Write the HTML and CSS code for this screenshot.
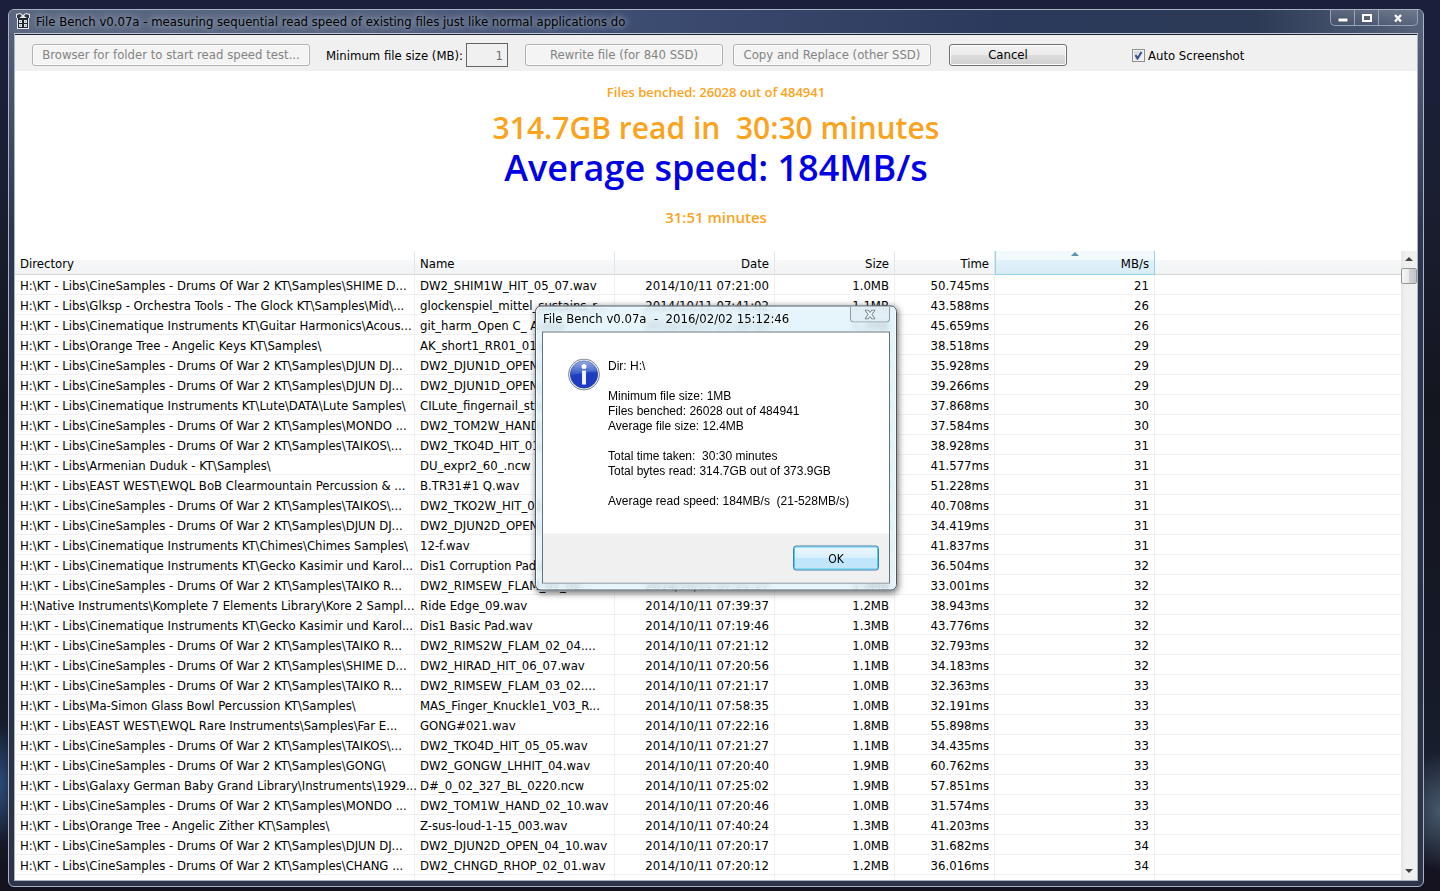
FILE: index.html
```html
<!DOCTYPE html>
<html lang="en">
<head>
    <meta charset="UTF-8">
    <meta name="viewport" content="width=device-width, initial-scale=1.0">
    <title>File Bench v0.07a</title>
    <link rel="stylesheet" href="styles.css">
</head>
<body>
    <div class="window">
        <div class="titlebar">
            <svg class="app-icon" width="16" height="16" viewBox="0 0 16 16">
                <path d="M1 1l4-1 3 2 3-2 4 1v4h-1v11H2V5H1z" fill="#e8ebf0"/>
                <path d="M2 2l3-1 2 2-3 2H2zM14 2l-3-1-2 2 3 2h2z" fill="#30343c"/>
                <path d="M3 5h10v10H3z" fill="#20242c"/>
                <path d="M4 7h3v3H4zM9 7h3v3H9zM4 11h3v3H4zM9 11h3v3H9z" fill="#dfe3ea"/>
                <path d="M5 8h1v1H5zM10 8h1v1h-1zM5 12h1v1H5zM10 12h1v1h-1z" fill="#7b818c"/>
            </svg>
            <h1 class="title">File Bench v0.07a - measuring sequential read speed of existing files just like normal applications do</h1>
            <div class="caption-buttons">
                <button type="button" aria-label="Minimize">
                    <svg width="12" height="10" viewBox="0 0 12 10"><path d="M1 5h10v4H1z" fill="#fff" stroke="#4a5567"/></svg>
                </button>
                <button type="button" aria-label="Maximize">
                    <svg width="12" height="10" viewBox="0 0 12 10"><path d="M2 2h8v6H2z" fill="none" stroke="#fff" stroke-width="2"/></svg>
                </button>
                <button type="button" class="close" aria-label="Close">
                    <svg width="12" height="10" viewBox="0 0 12 10"><path d="M3 2l6 6.500M9 2L3 8.500" stroke="#fff" stroke-width="2.400"/></svg>
                </button>
            </div>
        </div>

        <div class="client">
            <form class="toolbar">
                <button type="button" class="btn browse" disabled>Browser for folder to start read speed test...</button>
                <label class="size-label" for="min-size">Minimum file size (MB):</label>
                <input type="text" id="min-size" value="1" disabled>
                <button type="button" class="btn rewrite" disabled>Rewrite file (for 840 SSD)</button>
                <button type="button" class="btn copy" disabled>Copy and Replace (other SSD)</button>
                <button type="button" class="btn cancel">Cancel</button>
                <input type="checkbox" id="auto-shot" checked>
                <label for="auto-shot">Auto Screenshot</label>
            </form>

            <div class="stats">
                <p class="files">Files benched: 26028 out of 484941</p>
                <p class="read">314.7GB read in&nbsp; 30:30 minutes</p>
                <p class="speed">Average speed: 184MB/s</p>
                <p class="elapsed">31:51 minutes</p>
            </div>

            <div class="list">
                <div class="table-wrap">
                    <table id="results">
                        <colgroup>
                            <col class="col-dir">
                            <col class="col-name">
                            <col class="col-date">
                            <col class="col-size">
                            <col class="col-time">
                            <col class="col-speed">
                            <col>
                        </colgroup>
                        <thead>
                            <tr>
                                <th>Directory</th>
                                <th>Name</th>
                                <th class="num">Date</th>
                                <th class="num">Size</th>
                                <th class="num">Time</th>
                                <th class="num sorted">MB/s</th>
                                <th></th>
                            </tr>
                        </thead>
                        <tbody></tbody>
                    </table>
                </div>
                <div class="scrollbar">
                    <button type="button" aria-label="Scroll up"><svg width="8" height="5" viewBox="0 0 8 5"><path d="M4 0l4 4H0z" fill="#404040"/></svg></button>
                    <div class="thumb"></div>
                    <button type="button" class="down" aria-label="Scroll down"><svg width="8" height="5" viewBox="0 0 8 5"><path d="M0 0h8L4 4z" fill="#404040"/></svg></button>
                </div>
            </div>
        </div>

        <div class="dialog" role="dialog" aria-labelledby="dialog-title">
            <div class="dialog-title">
                <h2 id="dialog-title">File Bench v0.07a&nbsp; -&nbsp; 2016/02/02 15:12:46</h2>
                <button type="button" class="dialog-close" aria-label="Close">
                    <svg width="12" height="10" viewBox="0 0 12 10"><path d="M1 .5h3l2 2.500 2-2.500h3L8 5l3 4.500H8L6 7 4 9.500H1L4 5z" fill="#f4f8f9" stroke="#6b7b85"/></svg>
                </button>
            </div>
            <div class="dialog-client">
                <div class="message">
                    <svg class="info" width="32" height="32" viewBox="0 0 32 32">
                        <defs>
                            <linearGradient id="ball" x1="0" y1="0" x2="0" y2="1">
                                <stop offset="0" stop-color="#4a74d4"/>
                                <stop offset=".5" stop-color="#1d3fbe"/>
                                <stop offset="1" stop-color="#2038c8"/>
                            </linearGradient>
                            <linearGradient id="shine" x1="0" y1="0" x2="0" y2="1">
                                <stop offset="0" stop-color="#fff" stop-opacity=".4"/>
                                <stop offset="1" stop-color="#fff" stop-opacity=".08"/>
                            </linearGradient>
                        </defs>
                        <circle cx="16" cy="16" r="15.500" fill="#e4e8ec" stroke="#7d8a96"/>
                        <circle cx="16" cy="16" r="13.500" fill="url(#ball)" stroke="#24429c"/>
                        <path d="M3 17A13 13 0 0 1 29 13Q18 13 3 17z" fill="url(#shine)"/>
                        <circle cx="16" cy="8" r="2.500" fill="#fff"/>
                        <path d="M14 12h4v14h-4z" fill="#f1f3f8"/>
                    </svg>
                    <div class="message-text">
                        <p>Dir: H:\</p>
                        <p>Minimum file size: 1MB<br>Files benched: 26028 out of 484941<br>Average file size: 12.4MB</p>
                        <p>Total time taken:&nbsp; 30:30 minutes<br>Total bytes read: 314.7GB out of 373.9GB</p>
                        <p>Average read speed: 184MB/s&nbsp; (21-528MB/s)</p>
                    </div>
                </div>
                <div class="dialog-footer">
                    <button type="button" class="ok">OK</button>
                </div>
            </div>
        </div>
    </div>

    <script>
        const LIB = "H:\\KT - Libs\\";
        const DRUMS = LIB + "CineSamples - Drums Of War 2 KT\\Samples\\";

        // directory, name, date, size, time, MB/s
        const rows = [
            [DRUMS + "SHIME D...", "DW2_SHIM1W_HIT_05_07.wav", "2014/10/11 07:21:00", "1.0MB", "50.745ms", 21],
            [LIB + "Glksp - Orchestra Tools - The Glock KT\\Samples\\Mid\\...", "glockenspiel_mittel_sustains_r...", "2014/10/11 07:41:02", "1.1MB", "43.588ms", 26],
            [LIB + "Cinematique Instruments KT\\Guitar Harmonics\\Acous...", "git_harm_Open C_ A.wav", "2014/10/11 07:20:10", "1.2MB", "45.659ms", 26],
            [LIB + "Orange Tree - Angelic Keys KT\\Samples\\", "AK_short1_RR01_01.wav", "2014/10/11 07:38:12", "1.1MB", "38.518ms", 29],
            [DRUMS + "DJUN DJ...", "DW2_DJUN1D_OPEN_01.wav", "2014/10/11 07:20:14", "1.0MB", "35.928ms", 29],
            [DRUMS + "DJUN DJ...", "DW2_DJUN1D_OPEN_02.wav", "2014/10/11 07:20:14", "1.1MB", "39.266ms", 29],
            [LIB + "Cinematique Instruments KT\\Lute\\DATA\\Lute Samples\\", "CILute_fingernail_str.wav", "2014/10/11 07:19:58", "1.1MB", "37.868ms", 30],
            [DRUMS + "MONDO ...", "DW2_TOM2W_HAND_01.wav", "2014/10/11 07:20:48", "1.1MB", "37.584ms", 30],
            [DRUMS + "TAIKOS\\...", "DW2_TKO4D_HIT_01.wav", "2014/10/11 07:21:26", "1.2MB", "38.928ms", 31],
            [LIB + "Armenian Duduk - KT\\Samples\\", "DU_expr2_60_.ncw", "2014/10/11 07:18:40", "1.3MB", "41.577ms", 31],
            [LIB + "EAST WEST\\EWQL BoB Clearmountain Percussion & ...", "B.TR31#1 Q.wav", "2014/10/11 07:22:02", "1.6MB", "51.228ms", 31],
            [DRUMS + "TAIKOS\\...", "DW2_TKO2W_HIT_01.wav", "2014/10/11 07:21:22", "1.2MB", "40.708ms", 31],
            [DRUMS + "DJUN DJ...", "DW2_DJUN2D_OPEN_01.wav", "2014/10/11 07:20:17", "1.0MB", "34.419ms", 31],
            [LIB + "Cinematique Instruments KT\\Chimes\\Chimes Samples\\", "12-f.wav", "2014/10/11 07:19:32", "1.3MB", "41.837ms", 31],
            [LIB + "Cinematique Instruments KT\\Gecko Kasimir und Karol...", "Dis1 Corruption Pad.wav", "2014/10/11 07:19:46", "1.1MB", "36.504ms", 32],
            [DRUMS + "TAIKO R...", "DW2_RIMSEW_FLAM_01_02...", "2014/10/11 07:21:17", "1.0MB", "33.001ms", 32],
            ["H:\\Native Instruments\\Komplete 7 Elements Library\\Kore 2 Sampl...", "Ride Edge_09.wav", "2014/10/11 07:39:37", "1.2MB", "38.943ms", 32],
            [LIB + "Cinematique Instruments KT\\Gecko Kasimir und Karol...", "Dis1 Basic Pad.wav", "2014/10/11 07:19:46", "1.3MB", "43.776ms", 32],
            [DRUMS + "TAIKO R...", "DW2_RIMS2W_FLAM_02_04....", "2014/10/11 07:21:12", "1.0MB", "32.793ms", 32],
            [DRUMS + "SHIME D...", "DW2_HIRAD_HIT_06_07.wav", "2014/10/11 07:20:56", "1.1MB", "34.183ms", 32],
            [DRUMS + "TAIKO R...", "DW2_RIMSEW_FLAM_03_02....", "2014/10/11 07:21:17", "1.0MB", "32.363ms", 33],
            [LIB + "Ma-Simon Glass Bowl Percussion KT\\Samples\\", "MAS_Finger_Knuckle1_V03_R...", "2014/10/11 07:58:35", "1.0MB", "32.191ms", 33],
            [LIB + "EAST WEST\\EWQL Rare Instruments\\Samples\\Far E...", "GONG#021.wav", "2014/10/11 07:22:16", "1.8MB", "55.898ms", 33],
            [DRUMS + "TAIKOS\\...", "DW2_TKO4D_HIT_05_05.wav", "2014/10/11 07:21:27", "1.1MB", "34.435ms", 33],
            [DRUMS + "GONG\\", "DW2_GONGW_LHHIT_04.wav", "2014/10/11 07:20:40", "1.9MB", "60.762ms", 33],
            [LIB + "Galaxy German Baby Grand Library\\Instruments\\1929...", "D#_0_02_327_BL_0220.ncw", "2014/10/11 07:25:02", "1.9MB", "57.851ms", 33],
            [DRUMS + "MONDO ...", "DW2_TOM1W_HAND_02_10.wav", "2014/10/11 07:20:46", "1.0MB", "31.574ms", 33],
            [LIB + "Orange Tree - Angelic Zither KT\\Samples\\", "Z-sus-loud-1-15_003.wav", "2014/10/11 07:40:24", "1.3MB", "41.203ms", 33],
            [DRUMS + "DJUN DJ...", "DW2_DJUN2D_OPEN_04_10.wav", "2014/10/11 07:20:17", "1.0MB", "31.682ms", 34],
            [DRUMS + "CHANG ...", "DW2_CHNGD_RHOP_02_01.wav", "2014/10/11 07:20:12", "1.2MB", "36.016ms", 34],
            ["", "", "", "", "", ""]
        ];

        const tbody = document.querySelector("#results tbody");
        rows.forEach(function(row) {
            const tr = document.createElement("tr");
            row.concat("").forEach(function(value, i) {
                const td = document.createElement("td");
                td.textContent = value;
                if (i > 1) td.className = "num";
                tr.appendChild(td);
            });
            tbody.appendChild(tr);
        });
    </script>
</body>
</html>
```
FILE: styles.css
```css
/* Global styles */
* {
    box-sizing: border-box;
}

body {
    margin: 0;
    padding: 9px 16px 4px 8px;
    height: 100vh;
    display: flex;
    overflow: hidden;
    font-family: "DejaVu Sans Condensed", Roboto, sans-serif;
    font-size: 13px;
    color: #000;
    background:
        radial-gradient(ellipse 40px 60px at 100% 91%, #46586c, transparent),
        radial-gradient(ellipse 20px 60px at 0 88%, #2c4a78, transparent),
        linear-gradient(#1b1f3c 0, #1b1f33 20%, #14161f 45%, #151a26 75%, #1a2032 90%, #14131f 98%);
}

h1, h2, p {
    margin: 0;
    font-weight: normal;
}

button, input {
    font: inherit;
    margin: 0;
}

/* Window frame */
.window {
    position: relative;
    flex: 1;
    min-width: 0;
    display: flex;
    flex-direction: column;
    padding: 0 5px 5px;
    border: 1px solid #a9b3c4;
    border-radius: 6px;
    background: linear-gradient(#5a667c, #2b3850 25%, #263247 70%, #2e3448);
}

.titlebar {
    display: flex;
    align-items: flex-start;
    height: 23px;
    margin: 0 -5px;
    padding-left: 6px;
    border-radius: 5px 5px 0 0;
    background: linear-gradient(90deg, #5c6880, #56627e 25%, #3c4b70 45%, #2b3a5c 70%, #2c3a56 88%, #56637a);
}

.app-icon {
    margin: 3px 5px 0 0;
}

.title {
    font-size: 13px;
    line-height: 23px;
    white-space: nowrap;
    text-shadow: 0 0 5px #8f9bb0, 0 0 8px #8f9bb0, 0 0 10px #8f9bb0;
}

.caption-buttons {
    display: flex;
    margin: 0 5px 0 auto;
    border: 1px solid #97a3b4;
    border-top: none;
    border-radius: 0 0 5px 5px;
}

.caption-buttons button {
    display: flex;
    align-items: center;
    justify-content: center;
    width: 24px;
    height: 15px;
    padding: 0;
    border: none;
    border-right: 1px solid #97a3b4;
    background: linear-gradient(rgba(255, 255, 255, 0.15), rgba(255, 255, 255, 0.02));
}

.caption-buttons .close {
    width: 38px;
    border-right: none;
}

.client {
    flex: 1;
    min-height: 0;
    display: flex;
    flex-direction: column;
    border: 1px solid #a9b3c4;
    border-top-color: #c3cad6;
    background: #fff;
    overflow: hidden;
}

/* Toolbar */
.toolbar {
    display: flex;
    align-items: center;
    height: 37px;
    padding: 4px 17px 0;
    border-top: 1px solid #1a2234;
    background: #f0f0f0;
    white-space: nowrap;
}

.btn {
    height: 22px;
    padding: 0;
    border: 1px solid #707070;
    border-radius: 3px;
    line-height: 20px;
    background: linear-gradient(#f2f2f2, #ebebeb 50%, #dddddd 50%, #cfcfcf);
    box-shadow: inset 0 0 0 1px #fcfcfc;
    color: #000;
}

.btn:disabled {
    border-color: #adb2b5;
    background: #f4f4f4;
    color: #838383;
}

.browse {
    width: 278px;
    margin-right: 16px;
}

.size-label {
    width: 140px;
}

.rewrite {
    width: 198px;
    margin-right: 10px;
}

.copy {
    width: 198px;
    margin-right: 18px;
}

.cancel {
    width: 118px;
    margin-right: 65px;
}

#min-size {
    width: 42px;
    height: 24px;
    margin-right: 17px;
    padding: 0 4px;
    border: 1px solid #646464;
    background: #f0f0f0;
    color: #6d6d6d;
    text-align: right;
}

#auto-shot {
    appearance: none;
    width: 13px;
    height: 13px;
    margin-right: 3px;
    border: 1px solid #8e8f8f;
    background:
        url("data:image/svg+xml,%3Csvg xmlns='http://www.w3.org/2000/svg' viewBox='0 0 11 11'%3E%3Cpath d='M2.500 5l2 3.500L8.500 2' fill='none' stroke='%233a4f8e' stroke-width='2'/%3E%3C/svg%3E"),
        linear-gradient(135deg, #cfd5dc, #f6f6f6);
    box-shadow: inset 0 0 0 1px #f4f4f4;
}

/* Summary */
.stats {
    height: 180px;
    padding-top: 11px;
    font-family: "Open Sans", "Noto Sans", sans-serif;
    text-align: center;
    color: #fba31c;
}

.stats p {
    font-weight: 600;
}

.stats .files {
    font-size: 13px;
    line-height: 20px;
    margin-bottom: 6px;
}

.stats .read {
    font-size: 30px;
    line-height: 40px;
}

.stats .speed {
    font-size: 36px;
    line-height: 40px;
    margin-bottom: 19px;
    color: #0000e8;
}

.stats .elapsed {
    font-size: 15px;
    line-height: 20px;
}

/* Results list */
.list {
    flex: 1;
    min-height: 0;
    display: flex;
}

.table-wrap {
    flex: 1;
    min-width: 0;
    overflow: hidden;
}

#results {
    width: 100%;
    table-layout: fixed;
    border-collapse: separate;
    border-spacing: 0;
}

.col-dir { width: 400px; }
.col-name { width: 200px; }
.col-date { width: 160px; }
.col-size { width: 120px; }
.col-time { width: 100px; }
.col-speed { width: 160px; }

#results th, #results td {
    padding: 0 0 0 5px;
    font-weight: normal;
    text-align: left;
    white-space: nowrap;
}

#results th {
    position: relative;
    height: 24px;
    padding-top: 2px;
    border-right: 1px solid #e2e5ea;
    border-bottom: 1px solid #d5d5d5;
    background: linear-gradient(#fff 40%, #f7f8fa 40%, #f1f2f4);
}

#results td {
    height: 20px;
    padding-top: 2px;
    line-height: 17px;
    border-right: 1px solid #f0f0f0;
    border-bottom: 1px solid #f0f0f0;
}

#results .num {
    padding-right: 5px;
    text-align: right;
}

#results th:last-child, #results td:last-child {
    border-right: none;
}

#results .sorted {
    border-right-color: #96d0ec;
    border-bottom-color: #96d0ec;
    border-left: 1px solid #96d0ec;
    background: linear-gradient(#f2f9fc 40%, #e1f1f9 40%, #d8ecf6);
}

.sorted::before {
    content: "";
    position: absolute;
    top: 1px;
    left: 50%;
    border: 4px solid transparent;
    border-top: none;
    border-bottom-color: #5f93a8;
    transform: translateX(-50%);
}

.scrollbar {
    display: flex;
    flex-direction: column;
    width: 16px;
    background: linear-gradient(90deg, #e6e6e6, #f0f0f0 30%);
}

.scrollbar button {
    display: flex;
    align-items: center;
    justify-content: center;
    height: 17px;
    padding: 0;
    border: none;
    background: none;
}

.scrollbar .down {
    margin-top: auto;
}

.thumb {
    height: 16px;
    border: 1px solid #979797;
    border-radius: 2px;
    background: linear-gradient(90deg, #f5f5f5, #e9e9eb 50%, #d0d1d4 50%, #c4c5c9);
}

/* Message box */
.dialog {
    position: absolute;
    top: 50%;
    left: 50%;
    width: 362px;
    padding: 0 6px 6px;
    transform: translate(-50%, -50%);
    border: 1px solid #4c5660;
    border-radius: 6px;
    background: rgba(220, 242, 250, 0.75);
    backdrop-filter: blur(3px);
    box-shadow: inset 0 0 0 1px rgba(255, 255, 255, 0.8), 1px 2px 7px rgba(0, 0, 0, 0.6);
}

.dialog-title {
    display: flex;
    align-items: flex-start;
    justify-content: space-between;
    height: 25px;
}

.dialog-title h2 {
    padding-left: 1px;
    font-size: 13px;
    line-height: 24px;
    white-space: nowrap;
    text-shadow: 0 0 6px #fff;
}

.dialog-close {
    display: flex;
    align-items: center;
    justify-content: center;
    width: 40px;
    height: 16px;
    padding: 0;
    border: 1px solid #8d9ba3;
    border-top: none;
    border-radius: 0 0 4px 4px;
    background: rgba(225, 238, 243, 0.7);
}

.dialog-client {
    border: 1px solid #66747f;
    background: #fff;
}

.message {
    display: flex;
    gap: 8px;
    padding: 26px 25px 25px;
}

.message-text {
    font-family: "Liberation Sans", Arial, sans-serif;
    font-size: 12px;
    line-height: 15px;
    white-space: nowrap;
}

.message-text p + p {
    margin-top: 15px;
}

.dialog-footer {
    display: flex;
    justify-content: flex-end;
    padding: 12px 10px;
    background: #f0f0f0;
}

.ok {
    width: 86px;
    height: 25px;
    padding: 0;
    border: 1px solid #3c7fb1;
    border-radius: 3px;
    font-size: 12px;
    background: linear-gradient(#eaf6fd, #d9f0fc 50%, #bee6fd 50%, #c4e6f8);
    box-shadow: inset 0 0 0 1px #48d1f4;
}
```
